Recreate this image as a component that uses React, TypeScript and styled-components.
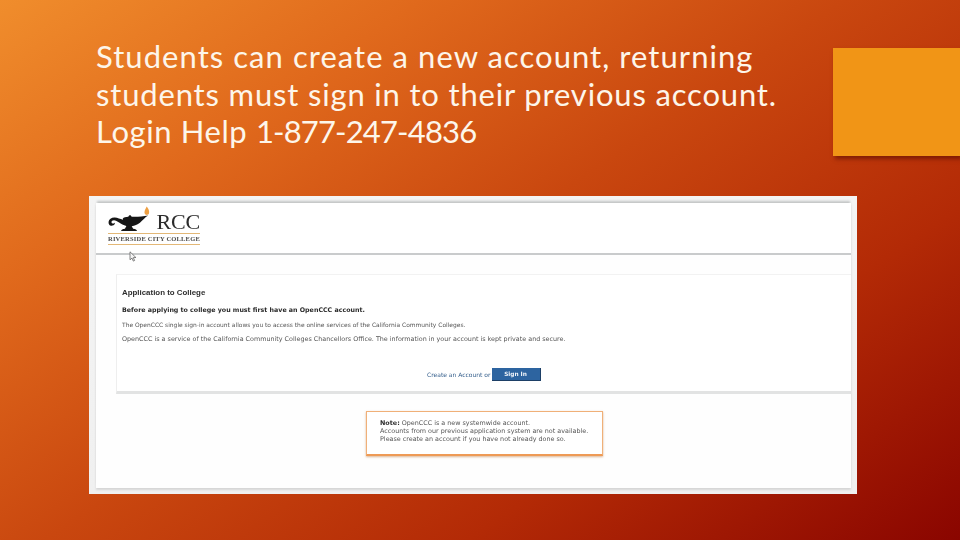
import React from "react";
import styled, { createGlobalStyle } from "styled-components";

const Global = createGlobalStyle`
  html, body { margin: 0; padding: 0; width: 960px; height: 540px; overflow: hidden; }
`;

const Slide = styled.main`
  position: relative;
  width: 960px;
  height: 540px;
  overflow: hidden;
  display: flex;
  flex-direction: column;
  background: linear-gradient(146deg, #f08d2c 0%, #e0691c 24%, #c9470f 48%, #b32a06 72%, #8a0500 100%);
`;

const TitleBlock = styled.header`
  box-sizing: border-box;
  height: 196px;
  padding: 38px 0 0 96px;
`;

const Title = styled.h1`
  margin: 0;
  width: 700px;
  font-family: "Lato", "Open Sans", sans-serif;
  font-weight: 400;
  font-size: 31px;
  line-height: 37.5px;
  color: #fdf6ea;
  white-space: nowrap;
`;

const TitleLine = styled.span<{ $spacing: number }>`
  display: block;
  letter-spacing: ${(p) => p.$spacing}px;
`;

const Phone = styled.span`
  letter-spacing: -0.85px;
`;

const Accent = styled.div`
  position: absolute;
  top: 48px;
  right: 0;
  width: 127px;
  height: 108px;
  background: #f19516;
  box-shadow: 2px 3px 4px rgba(80, 10, 0, 0.55);
`;

const Shot = styled.section`
  box-sizing: border-box;
  margin-left: 89px;
  width: 768px;
  height: 298px;
  padding: 7px 6px 6px 7px;
  background: linear-gradient(#f4f4f4, #f0f0f0);
  filter: blur(0.4px);
`;

const Page = styled.div`
  height: 100%;
  display: flex;
  flex-direction: column;
  background: #fefefe;
  box-shadow: 0 -3px 2px -1px #c4c6c6, 0 2px 2px #d6d6d6;
`;

const LogoBar = styled.div`
  position: relative;
  box-sizing: border-box;
  height: 52px;
  padding: 3px 0 0 12px;
  background: #fff;
  border-bottom: 2px solid #c9cbcc;
`;

const Logo = styled.div`
  width: 92px;
  display: flex;
  flex-direction: column;
`;

const LogoTop = styled.div`
  height: 26px;
  display: flex;
  align-items: flex-end;
`;

const Rcc = styled.span`
  margin-left: 6px;
  font-family: "Liberation Serif", serif;
  font-size: 22px;
  line-height: 21px;
  letter-spacing: -0.2px;
  color: #2b2b2b;
`;

const College = styled.div`
  margin-top: 1px;
  height: 10px;
  border-top: 1px solid #e3b877;
  border-bottom: 1px solid #e3b877;
  font-family: "Liberation Serif", serif;
  font-weight: 700;
  font-size: 6.5px;
  line-height: 10px;
  letter-spacing: 0.2px;
  color: #4a4a4a;
  white-space: nowrap;
`;

const Pointer = styled.svg`
  position: absolute;
  left: 33px;
  top: 48px;
`;

const Body = styled.div`
  flex: 1;
  box-sizing: border-box;
  padding: 19px 0 0 20px;
  display: flex;
  flex-direction: column;
`;

const Card = styled.article`
  box-sizing: border-box;
  height: 120px;
  padding: 13px 0 0 5px;
  background: #fff;
  border-left: 1px solid #eeeeee;
  border-top: 1px solid #f2f2f2;
  border-bottom: 3px solid #e2e3e3;
  display: flex;
  flex-direction: column;
`;

const CardTitle = styled.h2`
  margin: 0 0 8px;
  font-family: "Liberation Sans", sans-serif;
  font-weight: 700;
  font-size: 7.9px;
  line-height: 9px;
  color: #2f2f2f;
`;

const Para = styled.p<{ $size: number; $strong?: boolean }>`
  margin: 0 0 6px;
  font-family: "DejaVu Sans", sans-serif;
  font-weight: ${(p) => (p.$strong ? 700 : 400)};
  font-size: ${(p) => p.$size}px;
  line-height: 9px;
  color: ${(p) => (p.$strong ? "#2a2a2a" : "#555")};
  white-space: nowrap;
`;

const Actions = styled.div`
  margin-top: 18px;
  padding-left: 305px;
  display: flex;
  align-items: center;
  gap: 2px;
`;

const CreateLink = styled.span`
  font-family: "DejaVu Sans", sans-serif;
  font-size: 6px;
  line-height: 13px;
  color: #355f8c;
  white-space: nowrap;
`;

const SignIn = styled.button`
  width: 49px;
  height: 13px;
  margin-left: -1px;
  padding: 0;
  border: none;
  border-right: 1px solid #1d3f66;
  border-bottom: 1px solid #1d3f66;
  background: #2d64a0;
  color: #f1f5fa;
  font-family: "DejaVu Sans", sans-serif;
  font-size: 5.8px;
  font-weight: 700;
`;

const NoteRow = styled.div`
  padding: 17px 0 0 250px;
`;

const Note = styled.aside`
  box-sizing: border-box;
  width: 237px;
  height: 45px;
  padding: 7px 0 0 13px;
  background: #fff;
  border: 1px solid #f0b078;
  border-bottom: 2px solid #ee9a55;
  box-shadow: 0 1px 2px rgba(190, 120, 60, 0.55);
  font-family: "DejaVu Sans", sans-serif;
  font-size: 6.4px;
  line-height: 8px;
  color: #555;
  white-space: nowrap;
`;

const NoteLabel = styled.strong`
  color: #2a2a2a;
`;

export default function App() {
  return (
    <Slide>
      <Global />
      <TitleBlock>
        <Title>
          <TitleLine $spacing={1.05}>Students can create a new account, returning</TitleLine>
          <TitleLine $spacing={0.83}>students must sign in to their previous account.</TitleLine>
          <TitleLine $spacing={0.6}>
            Login Help <Phone>1-877-247-4836</Phone>
          </TitleLine>
        </Title>
      </TitleBlock>
      <Accent />
      <Shot>
        <Page>
          <LogoBar>
            <Logo>
              <LogoTop>
                <svg width="44" height="26" viewBox="0 0 44 26">
                  <path d="M40 0c1.900 2.400 3.200 5 2.300 7.400-.6 1.900-3.500 2-4.300.3-1-2.300.6-5 2-7.700z" fill="#eea044" />
                  <path d="M41.500 9.500c-3.500 1.800-5.500 5-8.500 7.500-2.500 2-5.500 3-8.500 3.400l1.500 2.800c2.300.3 4 1 4 2.300H13.500c0-1.300 1.700-2 4-2.300l1.500-3c-3-.5-5.500-2-7.500-3.500C9 14.500 6 13.500 4.300 14.800c-1.200 1-.8 2.700.7 2.900 1 .1 1.700-.4 2-1 .5 1.600-.6 3-2.500 3C2 20.700.2 18.500.6 15.800c.4-2.800 3.200-4.500 6.400-4.300 3 .2 5.500 1.500 8.500 2.200l-.2-1.300c.8-.9 3-1.500 5.700-1.700.2-1 .9-1.700 1.700-1.700s1.500.7 1.700 1.600c3 .1 6.500.1 10-.3 2.600-.3 5-.5 7.100-.8z" fill="#161616" />
                </svg>
                <Rcc>RCC</Rcc>
              </LogoTop>
              <College>RIVERSIDE CITY COLLEGE</College>
            </Logo>
            <Pointer width="8" height="11" viewBox="0 0 8 11">
              <path d="M1 .8v8l2-1.700 1.300 3 1.300-.6-1.300-2.900 2.600-.1z" fill="#f4f4f4" stroke="#555" strokeWidth="0.7" />
            </Pointer>
          </LogoBar>
          <Body>
            <Card>
              <CardTitle>Application to College</CardTitle>
              <Para $size={6.3} $strong>Before applying to college you must first have an OpenCCC account.</Para>
              <Para $size={5.95}>The OpenCCC single sign-in account allows you to access the online services of the California Community Colleges.</Para>
              <Para $size={6.4}>OpenCCC is a service of the California Community Colleges Chancellors Office. The information in your account is kept private and secure.</Para>
              <Actions>
                <CreateLink>Create an Account or</CreateLink>
                <SignIn>Sign In</SignIn>
              </Actions>
            </Card>
            <NoteRow>
              <Note>
                <NoteLabel>Note:</NoteLabel> OpenCCC is a new systemwide account.
                <br />
                Accounts from our previous application system are not available.
                <br />
                Please create an account if you have not already done so.
              </Note>
            </NoteRow>
          </Body>
        </Page>
      </Shot>
    </Slide>
  );
}
